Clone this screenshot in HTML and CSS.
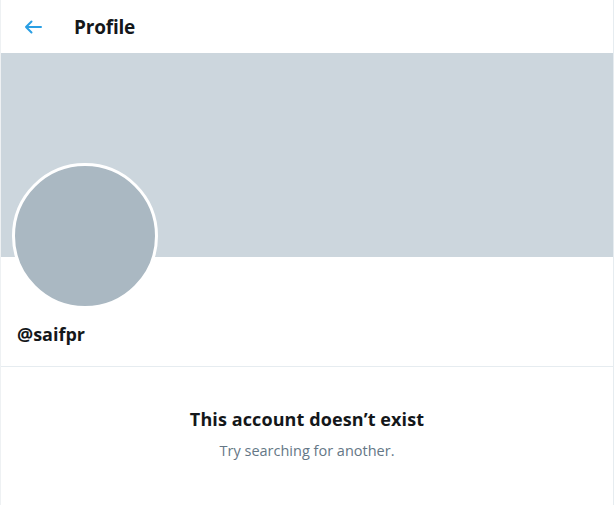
FILE: index.html
```html
<!DOCTYPE html>
<html lang="en">
<head>
<meta charset="utf-8">
<title>Profile</title>
<link rel="stylesheet" href="styles.css">
</head>
<body>
<div class="page">
  <header class="topbar">
    <span class="back" aria-label="Back">
      <svg width="18" height="14" viewBox="0 0 18 14" fill="none" stroke="#2a9fe4" stroke-width="2" stroke-linecap="round" stroke-linejoin="round"><path d="M17 7H2M7.5 1.5L2 7l5.5 5.5"/></svg>
    </span>
    <h1 class="title">Profile</h1>
  </header>
  <div class="banner"></div>
  <section class="info">
    <div class="avatar"></div>
    <div class="handle">@saifpr</div>
  </section>
  <section class="empty">
    <div class="empty-title">This account doesn’t exist</div>
    <div class="empty-sub">Try searching for another.</div>
  </section>
</div>
</body>
</html>
```
FILE: styles.css
```css
html, body {
  margin: 0;
  padding: 0;
  background: #ffffff;
}
body {
  font-family: "Open Sans", "Liberation Sans", sans-serif;
  color: #14171a;
}
.page {
  width: 612px;
  min-height: 505px;
  border-left: 1px solid #eef1f3;
  border-right: 1px solid #e6ecf0;
}
.topbar {
  height: 53px;
  display: flex;
  align-items: center;
  padding-left: 23px;
  box-sizing: border-box;
}
.back {
  display: flex;
  width: 18px;
  height: 14px;
}
.title {
  margin: 0 0 0 32px;
  font-size: 19px;
  font-weight: 700;
  letter-spacing: -0.2px;
}
.banner {
  height: 204px;
  background: #ccd6dd;
}
.info {
  display: flex;
  flex-direction: column;
  align-items: flex-start;
  padding: 0 16px 0 11px;
  height: 109px;
  border-bottom: 1px solid #e6ecf0;
}
.avatar {
  width: 140px;
  height: 140px;
  flex: none;
  border-radius: 50%;
  background: #aab8c2;
  border: 3px solid #ffffff;
  margin-top: -94px;
}
.handle {
  margin: 13px 0 0 5px;
  font-size: 18px;
  font-weight: 700;
  line-height: 24px;
}
.empty {
  display: flex;
  flex-direction: column;
  align-items: center;
  padding-top: 40px;
}
.empty-title {
  font-size: 18px;
  font-weight: 700;
  line-height: 24px;
  letter-spacing: 0.1px;
}
.empty-sub {
  margin-top: 10px;
  font-size: 14.5px;
  color: #657786;
  line-height: 20px;
}
```
